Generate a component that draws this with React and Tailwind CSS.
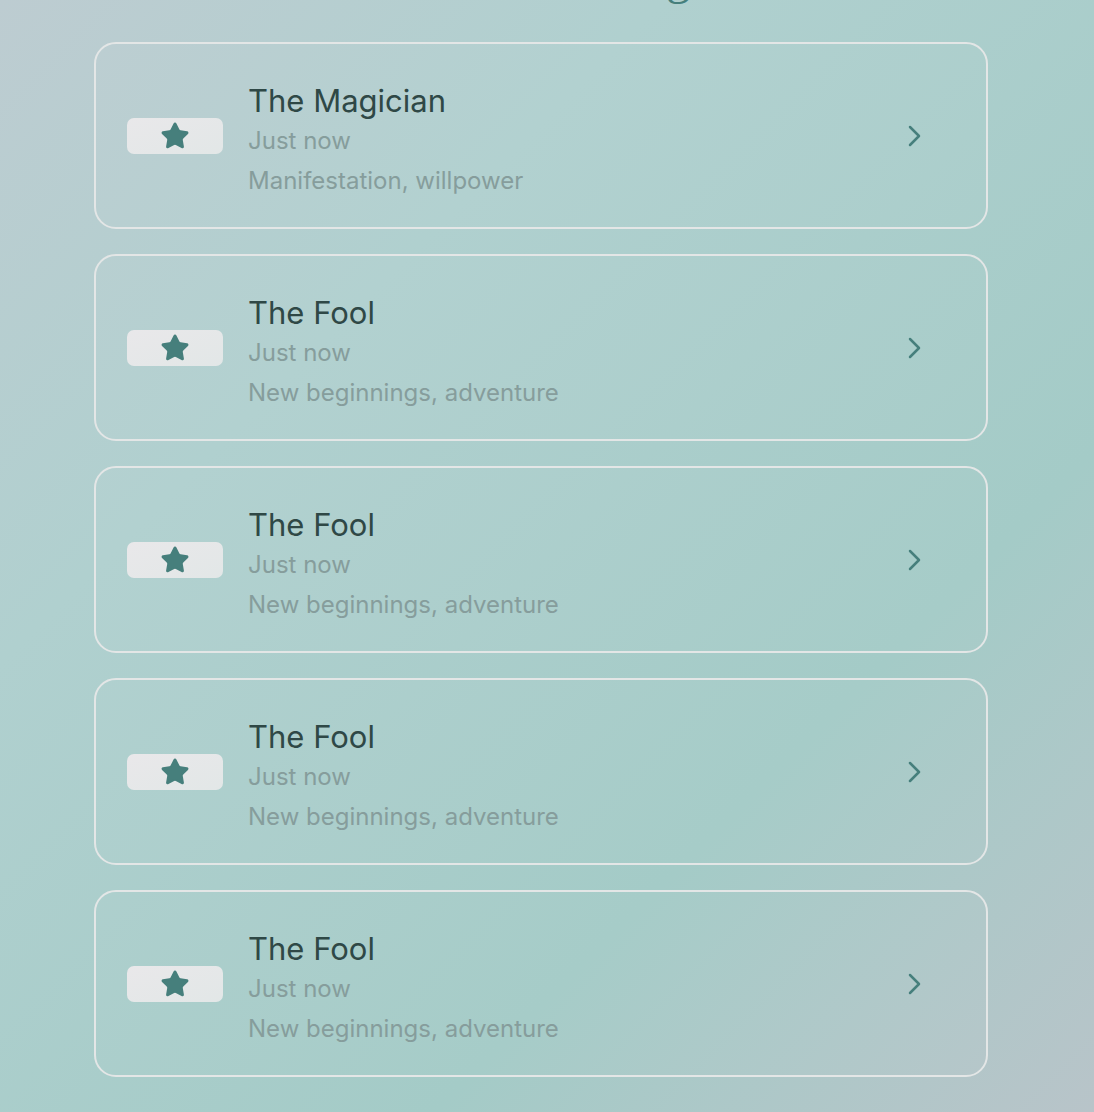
import { Star } from 'lucide-react';

const readings = [
  { id: 1, card: 'The Magician', when: 'Just now', meaning: 'Manifestation, willpower' },
  { id: 2, card: 'The Fool', when: 'Just now', meaning: 'New beginnings, adventure' },
  { id: 3, card: 'The Fool', when: 'Just now', meaning: 'New beginnings, adventure' },
  { id: 4, card: 'The Fool', when: 'Just now', meaning: 'New beginnings, adventure' },
  { id: 5, card: 'The Fool', when: 'Just now', meaning: 'New beginnings, adventure' },
];

function ReadingRow({ r }) {
  return (
    <button className="w-full h-[187px] text-left rounded-[22px] border-2 border-[#e3e6e6] bg-white/[0.03] pl-[31px] pr-[64px] flex items-center">
      {/* vignette carte */}
      <div className="w-[96px] h-[36px] rounded-[7px] bg-gradient-to-br from-[#e9e8ea] to-[#e2e7e7] flex items-center justify-center shrink-0">
        <Star size={30} strokeWidth={1.5} className="text-[#467f7c]" fill="currentColor" />
      </div>
      <div className="ml-[25px] mt-[6px] flex-1 min-w-0">
        <div className="text-[31px] leading-[40px] text-[#2f4846]">{r.card}</div>
        <div className="mt-[4px] text-[24px] leading-[32px] text-[#869d9c]">{r.when}</div>
        <div className="mt-[8px] text-[24px] leading-[32px] text-[#869d9c]">{r.meaning}</div>
      </div>
      <svg width="14" height="22" viewBox="0 0 14 22" className="shrink-0 text-[#467f7c]">
        <polyline points="2,2 11,11 2,20" fill="none" stroke="currentColor" strokeWidth="2.5" strokeLinecap="round" strokeLinejoin="round" />
      </svg>
    </button>
  );
}

export default function App() {
  return (
    <div
      className="min-h-screen overflow-hidden bg-[linear-gradient(135deg,#bdccd1_0%,#b0d0cf_30%,#a4cbc7_70%,#b8c4c9_100%)]"
      style={{ fontFamily: 'Inter, "Noto Sans", sans-serif' }}
    >
      <h1
        className="mt-[-46px] text-center text-[48px] leading-none text-[#467f7c]"
        style={{ fontFamily: '"Liberation Serif", serif' }}
      >
        Recent Readings
      </h1>
      <div className="ml-[94px] w-[894px] mt-[40px] pb-[35px] flex flex-col gap-[25px]">
        {readings.map((r) => (
          <ReadingRow key={r.id} r={r} />
        ))}
      </div>
    </div>
  );
}
